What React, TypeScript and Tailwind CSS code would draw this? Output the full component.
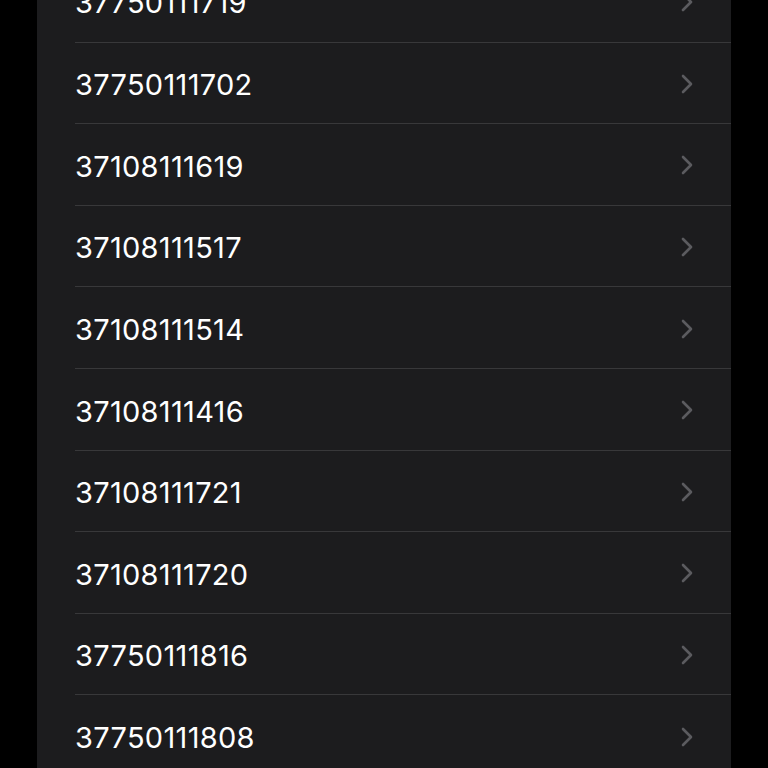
const numbers = [
  '37750111719',
  '37750111702',
  '37108111619',
  '37108111517',
  '37108111514',
  '37108111416',
  '37108111721',
  '37108111720',
  '37750111816',
  '37750111808',
];

export default function App() {
  return (
    <div className="h-[768px] w-[768px] overflow-hidden bg-black" style={{ fontFamily: 'Inter, "Liberation Sans", sans-serif' }}>
      <div className="ml-[37px] w-[694px] -mt-[40px] bg-[#1c1c1e]">
        {numbers.map((n, i) => (
          <div key={n} className="pl-[75px] -ml-[37px] flex">
            <div className={`flex-1 h-[81.6px] flex items-center justify-between pr-[38px] ${i > 0 ? 'border-t border-[#38383a]' : ''}`}>
              <span className="text-[29px] text-white tracking-[0.3px] pt-[4px]">{n}</span>
              <svg width="12" height="20" viewBox="0 0 12 20" fill="none" className="mt-[2px]">
                <path d="M2 2l8 8-8 8" stroke="#5b5b5f" strokeWidth="2.6" strokeLinecap="round" strokeLinejoin="round" />
              </svg>
            </div>
          </div>
        ))}
      </div>
    </div>
  );
}
